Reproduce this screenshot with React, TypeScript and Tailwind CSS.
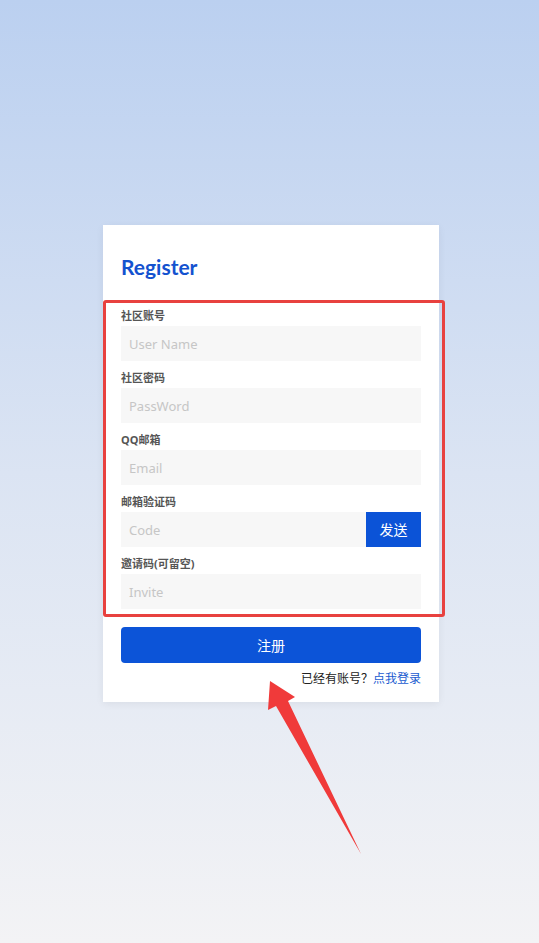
const font = { fontFamily: '"Noto Sans", "Noto Sans CJK SC", sans-serif' };

type FieldProps = {
  label: string;
  placeholder: string;
  type?: string;
  last?: boolean;
  action?: string;
};

function Field({ label, placeholder, type = 'text', last, action }: FieldProps) {
  return (
    <div className={last ? 'mb-[18px]' : 'mb-[10px]'}>
      <label className="block h-[14px] text-[11px] font-bold leading-[14px] text-[#555]">{label}</label>
      <div className="mt-[3px] flex h-[35px]">
        <input
          type={type}
          placeholder={placeholder}
          className="h-full min-w-0 flex-1 bg-[#f7f7f7] pl-2 text-[13px] text-[#333] outline-none placeholder:text-[#c6c6c6]"
        />
        {action && (
          <button className="h-full w-[55px] bg-[#0b53d7] text-[14px] text-white">{action}</button>
        )}
      </div>
    </div>
  );
}

export default function App() {
  return (
    <div
      className="relative h-[943px] w-[539px] overflow-hidden bg-gradient-to-b from-[#bbd0f0] via-[#dbe4f3] to-[#f3f3f5]"
      style={font}
    >
      <div className="ml-[103px] mt-[225px] w-[336px] bg-white px-[18px] pb-[15px] pt-[28px] shadow-[0_2px_8px_rgba(0,0,0,0.06)]">
        <h1
          className="h-[28px] text-[21px] font-bold leading-[28px] text-[#1452cf]"
          style={{ fontFamily: 'Lato, "Noto Sans", sans-serif' }}
        >
          Register
        </h1>
        <div className="mt-[28px]">
          <Field label="社区账号" placeholder="User Name" />
          <Field label="社区密码" placeholder="PassWord" type="password" />
          <Field label="QQ邮箱" placeholder="Email" />
          <Field label="邮箱验证码" placeholder="Code" action="发送" />
          <Field label="邀请码(可留空)" placeholder="Invite" last />
        </div>
        <button className="h-[36px] w-full rounded-[4px] bg-[#0c54d8] text-[14px] text-white">注册</button>
        <p className="mt-[8px] text-right text-[12px] leading-[16px] text-[#222]">
          已经有账号？<a className="text-[#1a5bd0]">点我登录</a>
        </p>
      </div>

      {/* annotation overlay */}
      <div className="pointer-events-none absolute left-[103px] top-[300px] h-[317px] w-[342px] rounded-[3px] border-[3px] border-[#e8413f]" />
      <svg className="pointer-events-none absolute left-0 top-0" width="539" height="943" viewBox="0 0 539 943">
        <polygon points="270,681 295,697 288,701 361,854 276,706 268,710" fill="#f03a3a" />
      </svg>
    </div>
  );
}
